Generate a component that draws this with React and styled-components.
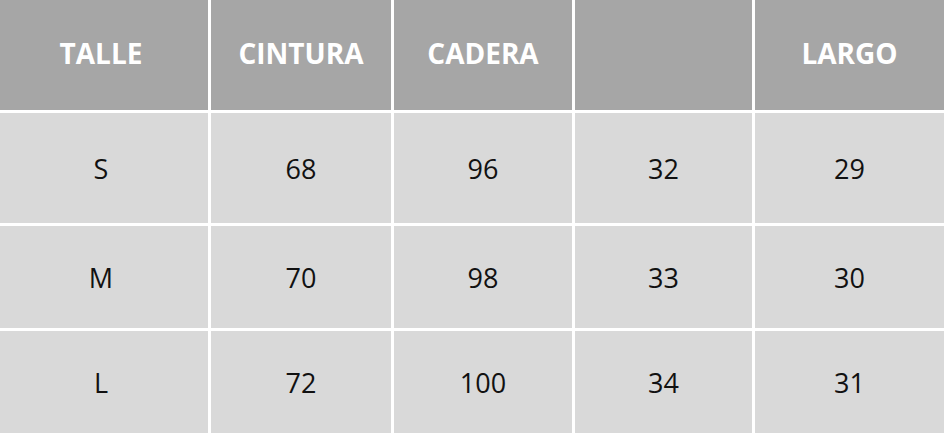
import React from "react";
import styled, { createGlobalStyle } from "styled-components";

const GlobalStyle = createGlobalStyle`
  html, body {
    margin: 0;
    padding: 0;
    background: #ffffff;
  }
  body {
    font-family: "Open Sans", "Liberation Sans", sans-serif;
  }
`;

const Table = styled.div`
  display: grid;
  grid-template-columns: 208px 180px 178px 177px 189px;
  grid-template-rows: 110px 110px 102px 102px;
  gap: 3px;
  width: 944px;
  background: #ffffff;
`;

const Cell = styled.div`
  display: flex;
  align-items: center;
  justify-content: center;
  background: ${(p) => (p.$head ? "#a6a6a6" : "#d9d9d9")};
  color: ${(p) => (p.$head ? "#ffffff" : "#111111")};
  font-size: ${(p) => (p.$head ? "28px" : "27px")};
  font-weight: ${(p) => (p.$head ? 700 : 400)};
  padding-bottom: ${(p) => (p.$head ? "4px" : "0")};
  padding-right: ${(p) => (p.$first ? "6px" : "0")};
`;

const headers = ["TALLE", "CINTURA", "CADERA", "", "LARGO"];
const rows = [
  ["S", "68", "96", "32", "29"],
  ["M", "70", "98", "33", "30"],
  ["L", "72", "100", "34", "31"],
];

const App = () => {
  return (
    <>
      <GlobalStyle />
      <Table>
        {headers.map((h, i) => (
          <Cell $head $first={i === 0} key={`h${i}`}>
            {h}
          </Cell>
        ))}
        {rows.map((row, r) =>
          row.map((v, c) => (
            <Cell $first={c === 0} key={`${r}-${c}`}>
              {v}
            </Cell>
          ))
        )}
      </Table>
    </>
  );
};

export default App;
